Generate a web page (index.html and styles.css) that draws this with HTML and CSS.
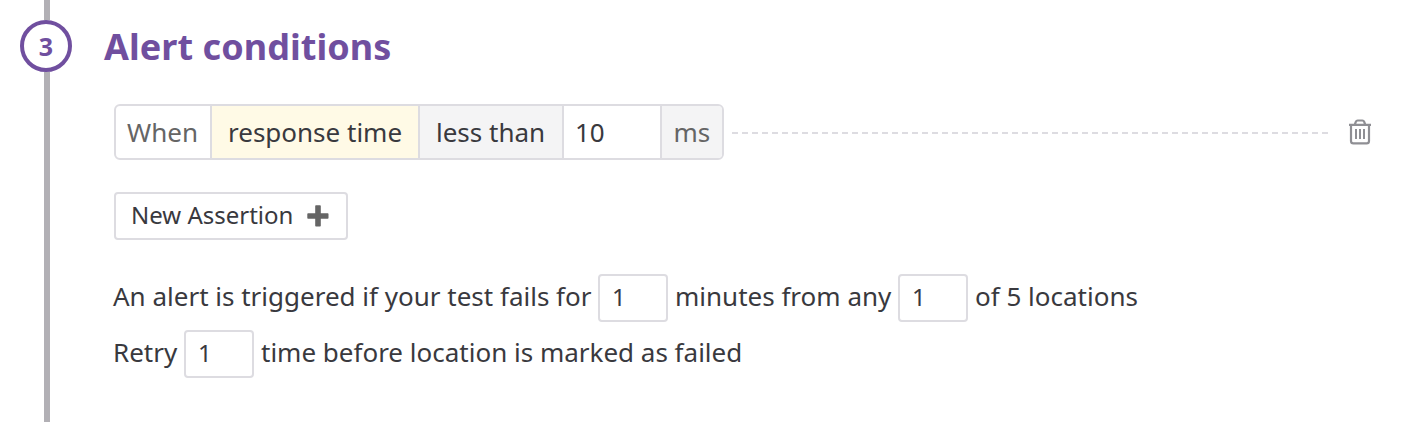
FILE: index.html
```html
<!DOCTYPE html>
<html lang="en">
<head>
<meta charset="utf-8">
<title>Alert conditions</title>
<link rel="stylesheet" href="styles.css">
</head>
<body>
<section class="step">
  <div class="rail">
    <span class="line line-top"></span>
    <span class="number">3</span>
    <span class="line line-rest"></span>
  </div>
  <div class="content">
    <h2 class="title">Alert conditions</h2>
    <div class="assertion">
      <div class="group">
        <span class="cell when">When</span>
        <span class="cell subject">response time</span>
        <span class="cell operator">less than</span>
        <input class="cell amount" type="text" value="10" aria-label="Threshold">
        <span class="cell unit">ms</span>
      </div>
      <span class="dashes"></span>
      <svg class="trash" viewBox="0 0 24 28" width="24" height="28" fill="none" stroke="#8f8f94" stroke-width="2">
        <path d="M1 6.900h22M6.800 6.500l1.100-2.800c.3-.8.8-1.200 1.700-1.200h4.800c.9 0 1.400.4 1.700 1.200l1.100 2.800M3 7v16c0 1.600.8 2.400 2.400 2.400h13.200c1.600 0 2.400-.8 2.400-2.400V7" stroke-width="2.200"/>
        <path d="M8 11v10M12 11v10M16 11v10"/>
      </svg>
    </div>
    <button class="add" type="button"><span class="add-label">New Assertion</span>
      <svg width="22" height="22" viewBox="0 0 22 22" fill="#656565"><path d="M9 .3h4q.8 0 .8.8v7.100h6.900q.8 0 .8.8v4q0 .8-.8.8h-6.900v6.900q0 .8-.8.8h-4q-.8 0-.8-.8v-6.900H1.100q-.8 0-.8-.8V9q0-.8.8-.8h7.100V1.100q0-.8.8-.8z"/></svg>
    </button>
    <div class="rule">
      <span class="text t1">An alert is triggered if your test fails for</span>
      <input class="count" type="text" value="1" aria-label="Minutes">
      <span class="text t2">minutes from any</span>
      <input class="count" type="text" value="1" aria-label="Locations">
      <span class="text">of 5 locations</span>
    </div>
    <div class="rule">
      <span class="text t3">Retry</span>
      <input class="count" type="text" value="1" aria-label="Retries">
      <span class="text">time before location is marked as failed</span>
    </div>
  </div>
</section>
</body>
</html>
```
FILE: styles.css
```css
* { box-sizing: border-box; }
body {
  margin: 0;
  background: #fff;
  color: #39393e;
  font-family: "Noto Sans", sans-serif;
  font-size: 26px;
}
.step { display: flex; height: 422px; overflow: hidden; }
.rail { display: flex; flex-direction: column; width: 72px; padding-left: 20px; }
.line { width: 6px; margin-left: 24px; background: #b2b0b5; }
.line-top { height: 20px; }
.line-rest { flex: 1; }
.number {
  display: flex;
  align-items: center;
  justify-content: center;
  width: 52px;
  height: 52px;
  border: 4px solid #704f9f;
  border-radius: 50%;
  color: #704f9f;
  font-size: 25px;
  font-weight: 700;
}
.content { flex: 1; padding: 20px 54px 0 41px; }
.title {
  height: 52px;
  margin: 0 0 32px -9px;
  color: #704f9f;
  font-size: 36px;
  font-weight: 700;
  letter-spacing: 0.05px;
  line-height: 53px;
}
.assertion { display: flex; align-items: center; margin-left: 1px; }
.group {
  display: flex;
  height: 56px;
  width: 610px;
  border: 2px solid #dddce1;
  border-radius: 6px;
  overflow: hidden;
}
.cell {
  height: 52px;
  border: 0 solid #dddce1;
  border-right-width: 2px;
  border-radius: 0;
  line-height: 52px;
  white-space: nowrap;
}
.when { width: 96px; padding-left: 11px; color: #656565; }
.subject { width: 208px; padding-left: 16px; background: #fffae6; }
.operator { width: 144px; padding-left: 16px; background: #f4f4f5; }
.amount {
  width: 98px;
  padding: 0 0 0 11px;
  color: inherit;
  font: inherit;
}
.unit { width: 60px; padding-left: 11.5px; border-right-width: 0; background: #f4f4f5; color: #656565; }
.dashes {
  flex: 1;
  height: 2px;
  margin: 2px 20px 0 8px;
  background: repeating-linear-gradient(90deg, #dddce1 0 6px, transparent 6px 10px);
}
.trash { flex: none; }
.add {
  display: flex;
  align-items: center;
  justify-content: space-between;
  width: 234px;
  height: 48px;
  margin: 32px 0 34px 1px;
  padding: 0 17px 0 15px;
  border: 2px solid #dddce1;
  border-radius: 4px;
  background: #fff;
  color: inherit;
  font: 24px/42px "Noto Sans", sans-serif;
}
.add-label { margin-top: -2px; }
.rule { display: flex; height: 48px; margin-bottom: 8px; white-space: nowrap; }
.text { line-height: 45px; }
.t1 { width: 477px; }
.t2 { width: 215px; }
.t3 { width: 63px; }
.count {
  width: 70px;
  height: 48px;
  margin: 0 7px 0 8px;
  padding: 0 0 3px 12px;
  border: 2px solid #dddce1;
  border-radius: 4px;
  color: inherit;
  font: 24px "Noto Sans", sans-serif;
}
```
